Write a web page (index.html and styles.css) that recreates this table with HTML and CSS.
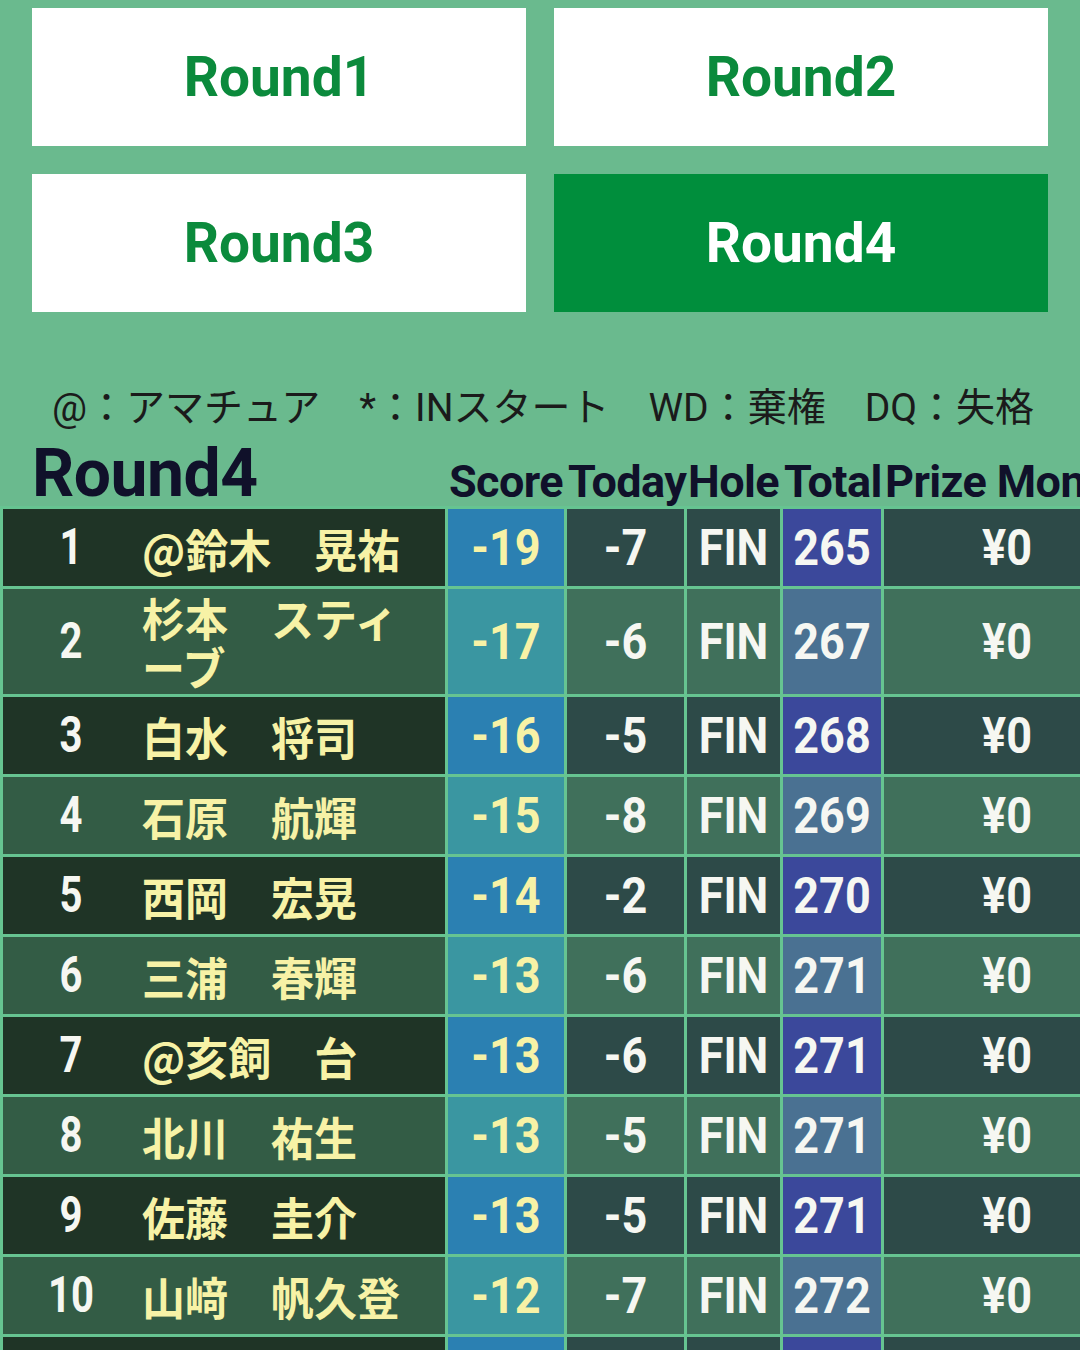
FILE: index.html
```html
<!DOCTYPE html>
<html lang="ja">
<head>
<meta charset="utf-8">
<title>Round4 Leaderboard</title>
<link rel="stylesheet" href="styles.css">
</head>
<body>
<nav class="rounds">
  <a class="round-btn">Round1</a>
  <a class="round-btn">Round2</a>
  <a class="round-btn">Round3</a>
  <a class="round-btn active">Round4</a>
</nav>
<p class="legend">@：アマチュア　*：INスタート　WD：棄権　DQ：失格</p>
<section class="board">
  <div class="head">
    <div class="title">Round4</div>
    <div class="col">Score</div>
    <div class="col">Today</div>
    <div class="col">Hole</div>
    <div class="col">Total</div>
    <div class="col">Prize Money</div>
  </div>
  <div class="rows">
    <div class="row"><div class="cell player"><span class="rank">1</span><span class="name">@鈴木　晃祐</span></div><div class="cell score"><span class="val">-19</span></div><div class="cell today"><span class="val">-7</span></div><div class="cell hole"><span class="val">FIN</span></div><div class="cell total"><span class="val">265</span></div><div class="cell prize"><span class="val">¥0</span></div></div>
    <div class="row"><div class="cell player"><span class="rank">2</span><span class="name">杉本　スティーブ</span></div><div class="cell score"><span class="val">-17</span></div><div class="cell today"><span class="val">-6</span></div><div class="cell hole"><span class="val">FIN</span></div><div class="cell total"><span class="val">267</span></div><div class="cell prize"><span class="val">¥0</span></div></div>
    <div class="row"><div class="cell player"><span class="rank">3</span><span class="name">白水　将司</span></div><div class="cell score"><span class="val">-16</span></div><div class="cell today"><span class="val">-5</span></div><div class="cell hole"><span class="val">FIN</span></div><div class="cell total"><span class="val">268</span></div><div class="cell prize"><span class="val">¥0</span></div></div>
    <div class="row"><div class="cell player"><span class="rank">4</span><span class="name">石原　航輝</span></div><div class="cell score"><span class="val">-15</span></div><div class="cell today"><span class="val">-8</span></div><div class="cell hole"><span class="val">FIN</span></div><div class="cell total"><span class="val">269</span></div><div class="cell prize"><span class="val">¥0</span></div></div>
    <div class="row"><div class="cell player"><span class="rank">5</span><span class="name">西岡　宏晃</span></div><div class="cell score"><span class="val">-14</span></div><div class="cell today"><span class="val">-2</span></div><div class="cell hole"><span class="val">FIN</span></div><div class="cell total"><span class="val">270</span></div><div class="cell prize"><span class="val">¥0</span></div></div>
    <div class="row"><div class="cell player"><span class="rank">6</span><span class="name">三浦　春輝</span></div><div class="cell score"><span class="val">-13</span></div><div class="cell today"><span class="val">-6</span></div><div class="cell hole"><span class="val">FIN</span></div><div class="cell total"><span class="val">271</span></div><div class="cell prize"><span class="val">¥0</span></div></div>
    <div class="row"><div class="cell player"><span class="rank">7</span><span class="name">@亥飼　台</span></div><div class="cell score"><span class="val">-13</span></div><div class="cell today"><span class="val">-6</span></div><div class="cell hole"><span class="val">FIN</span></div><div class="cell total"><span class="val">271</span></div><div class="cell prize"><span class="val">¥0</span></div></div>
    <div class="row"><div class="cell player"><span class="rank">8</span><span class="name">北川　祐生</span></div><div class="cell score"><span class="val">-13</span></div><div class="cell today"><span class="val">-5</span></div><div class="cell hole"><span class="val">FIN</span></div><div class="cell total"><span class="val">271</span></div><div class="cell prize"><span class="val">¥0</span></div></div>
    <div class="row"><div class="cell player"><span class="rank">9</span><span class="name">佐藤　圭介</span></div><div class="cell score"><span class="val">-13</span></div><div class="cell today"><span class="val">-5</span></div><div class="cell hole"><span class="val">FIN</span></div><div class="cell total"><span class="val">271</span></div><div class="cell prize"><span class="val">¥0</span></div></div>
    <div class="row"><div class="cell player"><span class="rank">10</span><span class="name">山﨑　帆久登</span></div><div class="cell score"><span class="val">-12</span></div><div class="cell today"><span class="val">-7</span></div><div class="cell hole"><span class="val">FIN</span></div><div class="cell total"><span class="val">272</span></div><div class="cell prize"><span class="val">¥0</span></div></div>
    <div class="row" aria-hidden="true"><div class="cell player"></div><div class="cell score"></div><div class="cell today"></div><div class="cell hole"></div><div class="cell total"></div><div class="cell prize"></div></div>
  </div>
</section>
</body>
</html>
```
FILE: styles.css
```css
* { box-sizing: border-box; }
html, body { margin: 0; overflow: hidden; }
body {
  width: 1080px;
  height: 1350px;
  background: #6aba8e;
  font-family: Roboto, "Noto Sans CJK JP", sans-serif;
}

.rounds {
  display: grid;
  grid-template-columns: 494px 494px;
  gap: 28px;
  padding: 8px 32px 0;
}
.round-btn {
  height: 138px;
  background: #ffffff;
  color: #0b8a3c;
  font: 700 55px/1 Roboto, sans-serif;
  display: flex;
  align-items: center;
  justify-content: center;
}
.round-btn.active {
  background: #008e3c;
  color: #ffffff;
}

.legend {
  margin: 71px 0 0;
  padding-left: 52px;
  font: 400 39px/50px Roboto, "Noto Sans CJK JP", sans-serif;
  color: #1b1b1b;
  white-space: nowrap;
}

.board {
  --cols: 442px 116px 117px 93px 98px 246px;
  width: 1130px;
}
.head {
  display: grid;
  grid-template-columns: var(--cols);
  column-gap: 3px;
  padding-left: 3px;
  height: 73px;
  align-items: end;
}
.head .title {
  padding-left: 29px;
  font: 700 66px/1 Roboto, sans-serif;
  color: #10112a;
  margin-bottom: -1px;
  letter-spacing: -0.5px;
}
.head .col {
  font: 700 45px/1 Roboto, sans-serif;
  color: #10112a;
  white-space: nowrap;
  padding: 0 0 2px 1px;
  letter-spacing: -0.6px;
}

.rows {
  background: #66c491;
  padding: 3px 0 0 3px;
  display: flex;
  flex-direction: column;
  gap: 3px;
}
.row {
  display: grid;
  grid-template-columns: var(--cols);
  column-gap: 3px;
  min-height: 77px;
}
.cell {
  display: flex;
  align-items: center;
  justify-content: center;
  font: 700 45px/1 Roboto, sans-serif;
  color: #f6f7f2;
}
.val {
  display: inline-block;
  transform: scaleY(1.1);
}
.cell.player { justify-content: flex-start; }
.rank {
  width: 136px;
  flex: none;
  text-align: center;
  font-size: 40px;
  transform: scaleY(1.25);
}
.name {
  max-width: 285px;
  padding: 6px 0 5px 3px;
  font: 700 43px/47px "Noto Sans CJK JP", sans-serif;
  color: #f7f2a6;
  line-break: normal;
  transform: scaleY(1.05);
}
.cell.score { color: #f7f2a6; }

.row:nth-child(odd) .player { background: #1f3426; }
.row:nth-child(odd) .score { background: #2b80b2; }
.row:nth-child(odd) .today,
.row:nth-child(odd) .hole,
.row:nth-child(odd) .prize { background: #2d4a48; }
.row:nth-child(odd) .total { background: #3b489b; }

.row:nth-child(even) .player { background: #335c45; }
.row:nth-child(even) .score { background: #3a96a1; }
.row:nth-child(even) .today,
.row:nth-child(even) .hole,
.row:nth-child(even) .prize { background: #40705b; }
.row:nth-child(even) .total { background: #4a7192; }
```
